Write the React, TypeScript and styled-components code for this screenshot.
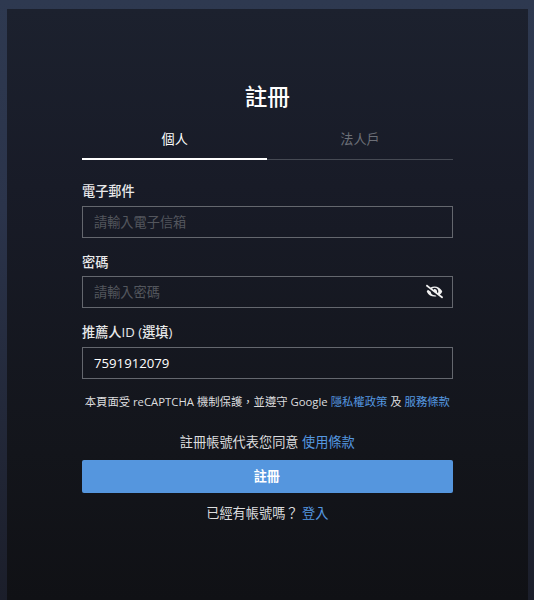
import React, { useState } from "react";
import styled, { createGlobalStyle } from "styled-components";
import { FaEye, FaEyeSlash } from "react-icons/fa";

const GlobalStyle = createGlobalStyle`
  * {
    box-sizing: border-box;
  }
  body {
    margin: 0;
    font-family: "Open Sans", "Noto Sans CJK TC", sans-serif;
    color: #dcdddf;
    background: #1a1d2a;
  }
`;

const Page = styled.div`
  height: 100vh;
  overflow: hidden;
  padding: 9px 6px 0 7px;
  background: linear-gradient(180deg, #2e3950 0%, #2b344b 35%, #1b1e2a 100%);
`;

const Panel = styled.main`
  height: 100%;
  padding: 73px 75.4px 0 75px;
  background: linear-gradient(180deg, #1c212e 0%, #181b27 30%, #13151b 75%, #101115 100%);
`;

const Title = styled.h1`
  margin: 0;
  height: 30px;
  font-size: 22.6px;
  font-weight: 500;
  line-height: 30px;
  text-align: center;
  color: #fff;
`;

const Tabs = styled.div`
  display: flex;
  margin-top: 11px;
`;

const Tab = styled.button<{ $active?: boolean }>`
  flex: 1;
  height: 37px;
  padding: 0 0 5px;
  border: 0;
  background: none;
  font-family: inherit;
  font-size: 13.1px;
  line-height: 20px;
  color: ${(p) => (p.$active ? "#fff" : "#6c6f77")};
  box-shadow: ${(p) => (p.$active ? "inset 0 -2px #fff" : "inset 0 -1px #464a54")};
  cursor: pointer;
`;

const Form = styled.form`
  margin-top: 21px;
`;

const Field = styled.div`
  margin-bottom: 13.9px;
`;

const Label = styled.label`
  display: block;
  height: 24.7px;
  font-size: 13.2px;
  font-weight: 500;
  line-height: 20px;
  color: #e8e9ea;
`;

const InputBox = styled.div`
  display: flex;
  align-items: center;
  height: 32px;
  border: 1px solid #64676e;
  padding: 0 9px 0 11px;
`;

const Input = styled.input`
  flex: 1;
  min-width: 0;
  height: 100%;
  padding: 0;
  border: 0;
  outline: 0;
  background: transparent;
  font-family: inherit;
  font-size: 13.2px;
  color: #fff;

  &::placeholder {
    color: #53565d;
    opacity: 1;
  }
`;

const EyeButton = styled.button`
  display: flex;
  padding: 0 0 1px;
  border: 0;
  background: none;
  color: #f0f0f0;
  cursor: pointer;
`;

const Text = styled.p<{ $small?: boolean; $top: number }>`
  margin: ${(p) => p.$top}px 0 0;
  font-size: ${(p) => (p.$small ? 11.33 : 13.2)}px;
  line-height: 20px;
  text-align: center;
  white-space: nowrap;
`;

const Link = styled.a`
  color: #5598e0;
  text-decoration: none;
`;

const Submit = styled.button`
  display: block;
  width: 100%;
  height: 33px;
  margin-top: 8px;
  padding: 0 1px 1px 0;
  border: 0;
  border-radius: 2px;
  background: #5596de;
  font-family: inherit;
  font-size: 13.1px;
  font-weight: 700;
  color: #fff;
  cursor: pointer;
`;

const App = () => {
  const [tab, setTab] = useState("personal");
  const [showPassword, setShowPassword] = useState(false);
  const [referrer, setReferrer] = useState("7591912079");

  return (
    <>
      <GlobalStyle />
      <Page>
        <Panel>
          <Title>註冊</Title>
          <Tabs>
            <Tab $active={tab === "personal"} onClick={() => setTab("personal")}>個人</Tab>
            <Tab $active={tab === "corporate"} onClick={() => setTab("corporate")}>法人戶</Tab>
          </Tabs>
          <Form onSubmit={(e) => e.preventDefault()}>
            <Field>
              <Label htmlFor="email">電子郵件</Label>
              <InputBox>
                <Input id="email" type="email" placeholder="請輸入電子信箱" />
              </InputBox>
            </Field>
            <Field>
              <Label htmlFor="password">密碼</Label>
              <InputBox>
                <Input id="password" type={showPassword ? "text" : "password"} placeholder="請輸入密碼" />
                <EyeButton type="button" onClick={() => setShowPassword(!showPassword)}>
                  {showPassword ? <FaEye size={17} /> : <FaEyeSlash size={17} />}
                </EyeButton>
              </InputBox>
            </Field>
            <Field>
              <Label htmlFor="referrer">推薦人ID (選填)</Label>
              <InputBox>
                <Input id="referrer" value={referrer} onChange={(e) => setReferrer(e.target.value)} />
              </InputBox>
            </Field>
            <Text $small $top={-1}>
              本頁面受 reCAPTCHA 機制保護，並遵守 Google <Link href="#">隱私權政策</Link> 及 <Link href="#">服務條款</Link>
            </Text>
            <Text $top={20}>
              註冊帳號代表您同意 <Link href="#">使用條款</Link>
            </Text>
            <Submit type="submit">註冊</Submit>
          </Form>
          <Text $top={10}>
            已經有帳號嗎？ <Link href="#">登入</Link>
          </Text>
        </Panel>
      </Page>
    </>
  );
};

export default App;
